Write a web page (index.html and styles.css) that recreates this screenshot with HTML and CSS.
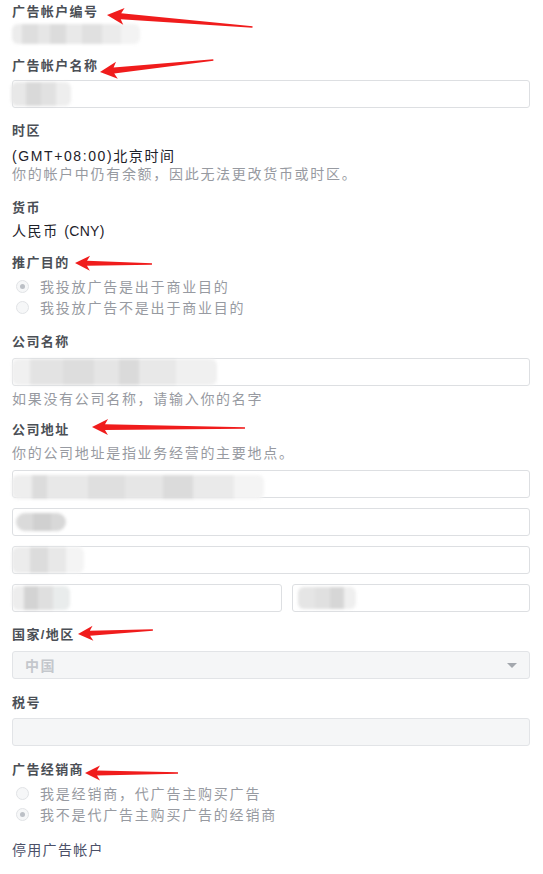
FILE: index.html
```html
<!DOCTYPE html>
<html lang="zh-CN">
<head>
<meta charset="utf-8">
<title>广告帐户设置</title>
<link rel="stylesheet" href="styles.css">
</head>
<body>
<div class="page">
  <div class="label l-first">广告帐户编号</div>
  <div class="blob-row"><span class="blob blob-id"></span></div>

  <div class="label l-name">广告帐户名称</div>
  <div class="input mt4"><span class="blob blob-name"></span></div>

  <div class="label l-tz">时区</div>
  <div class="value mt6">(GMT+08:00)北京时间</div>
  <div class="helper">你的帐户中仍有余额，因此无法更改货币或时区。</div>

  <div class="label l-cur">货币</div>
  <div class="value mt4">人民币 <span class="latin">(CNY)</span></div>

  <div class="label l-purpose">推广目的</div>
  <div class="radios">
    <div class="radio-row"><span class="radio checked"></span><span>我投放广告是出于商业目的</span></div>
    <div class="radio-row"><span class="radio"></span><span>我投放广告不是出于商业目的</span></div>
  </div>

  <div class="label l-company">公司名称</div>
  <div class="input mt6"><span class="blob blob-company"></span></div>
  <div class="helper mt4">如果没有公司名称，请输入你的名字</div>

  <div class="label l-addr">公司地址</div>
  <div class="helper mt4">你的公司地址是指业务经营的主要地点。</div>
  <div class="addr-list">
    <div class="input"><span class="blob blob-a1"></span></div>
    <div class="input"><span class="blob blob-a2"></span></div>
    <div class="input"><span class="blob blob-a3"></span></div>
    <div class="addr-split">
      <div class="input"><span class="blob blob-a4"></span></div>
      <div class="input"><span class="blob blob-a5"></span></div>
    </div>
  </div>

  <div class="label l-country">国家/地区</div>
  <div class="input disabled select mt6"><span class="select-text">中国</span><span class="caret"></span></div>

  <div class="label l-tax">税号</div>
  <div class="input disabled mt5"></div>

  <div class="label l-agency">广告经销商</div>
  <div class="radios">
    <div class="radio-row"><span class="radio"></span><span>我是经销商，代广告主购买广告</span></div>
    <div class="radio-row"><span class="radio checked"></span><span>我不是代广告主购买广告的经销商</span></div>
  </div>

  <div class="deactivate">停用广告帐户</div>

  <svg class="arrows" width="543" height="874" viewBox="0 0 543 874" aria-hidden="true">
    <g fill="#f01c1c">
      <polygon transform="translate(107,15) rotate(4.7)" points="0,0 17,-8.5 14,-3 146,-0.8 146,0.8 14,3 17,8.5"/>
      <polygon transform="translate(100,72) rotate(-6.06)" points="0,0 17,-8.5 14,-3 114,-0.8 114,0.8 14,3 17,8.5"/>
      <polygon transform="translate(75,263) rotate(0.75)" points="0,0 15,-7.5 12,-2.5 77,-0.7 77,0.7 12,2.5 15,7.5"/>
      <polygon transform="translate(92,427) rotate(0.37)" points="0,0 16,-8 13,-2.8 153,-0.8 153,0.8 13,2.8 16,8"/>
      <polygon transform="translate(78,634) rotate(-3.1)" points="0,0 15,-7.5 12,-2.5 75,-0.7 75,0.7 12,2.5 15,7.5"/>
      <polygon transform="translate(85,773) rotate(0)" points="0,0 15,-7.5 12,-2.5 93,-0.7 93,0.7 12,2.5 15,7.5"/>
    </g>
  </svg>
</div>
</body>
</html>
```
FILE: styles.css
```css
* { box-sizing: border-box; }

html, body {
  margin: 0;
  padding: 0;
  background: #ffffff;
}

body {
  font-family: "Liberation Sans", "Noto Sans CJK SC", sans-serif;
  color: #1d2129;
}

.page {
  position: relative;
  width: 543px;
  height: 874px;
  padding: 2px 13px 0 12px;
  overflow: hidden;
}

.label {
  font-size: 13px;
  font-weight: bold;
  letter-spacing: 1.4px;
  line-height: 20px;
  height: 20px;
  color: #4b4f56;
  white-space: nowrap;
}

.l-first { margin-top: 0; }
.l-name { margin-top: 12px; }
.l-tz { margin-top: 13px; }
.l-cur { margin-top: 15px; }
.l-purpose { margin-top: 13px; }
.l-company { margin-top: 14.5px; }
.l-addr { margin-top: 12px; }
.l-country { margin-top: 13px; }
.l-tax { margin-top: 14px; }
.l-agency { margin-top: 14px; }

.mt4 { margin-top: 4px; }
.mt5 { margin-top: 5px; }
.mt6 { margin-top: 6px; }

.value {
  font-size: 14px;
  letter-spacing: 1.6px;
  line-height: 18px;
  color: #1d2129;
  white-space: nowrap;
}

.latin {
  letter-spacing: 0.3px;
}

.helper {
  font-size: 14px;
  letter-spacing: 1.7px;
  line-height: 18px;
  color: #979aa1;
  white-space: nowrap;
}

.blob-row {
  margin-top: 2px;
  height: 20px;
  display: flex;
  align-items: center;
}

.blob {
  display: block;
  filter: blur(1.6px);
  border-radius: 6px;
}

.blob-id {
  width: 128px;
  height: 20px;
  background: linear-gradient(90deg, #ececec 0 8%, #dedede 8% 20%, #e6e6e6 20% 30%, #dcdcdc 30% 42%, #e9e9e9 42% 55%, #e0e0e0 55% 70%, #ebebeb 70% 85%, #f3f3f3 85% 100%);
}

.input {
  height: 28px;
  border: 1px solid #dddfe2;
  border-radius: 3px;
  background: #ffffff;
  display: flex;
  align-items: center;
  overflow: visible;
}

.input.disabled {
  background: #f5f6f7;
  border-color: #e2e4e7;
}

.blob-name {
  width: 60px;
  height: 24px;
  margin-left: -2px;
  background: linear-gradient(90deg, #e8e8e8 0 25%, #d9d9d9 25% 50%, #e1e1e1 50% 75%, #eeeeee 75% 100%);
}

.blob-company {
  width: 205px;
  height: 26px;
  margin-left: -1px;
  background: linear-gradient(90deg, #f0f0f0 0 9%, #e3e3e3 9% 25%, #dddddd 25% 40%, #e5e5e5 40% 52%, #dadada 52% 62%, #e8e8e8 62% 80%, #f0f0f0 80% 100%);
}

.radios {
  margin-top: 2.5px;
}

.radio-row {
  display: flex;
  align-items: center;
  height: 21px;
  font-size: 14px;
  letter-spacing: 1.8px;
  color: #979aa1;
  white-space: nowrap;
}

.radio {
  width: 13px;
  height: 13px;
  margin-left: 4px;
  margin-right: 11px;
  border: 1px solid #e1e3e6;
  border-radius: 50%;
  background: #f6f7f8;
  display: flex;
  align-items: center;
  justify-content: center;
  flex: none;
}

.radio.checked::after {
  content: "";
  width: 5px;
  height: 5px;
  border-radius: 50%;
  background: #bcc0c6;
}

.addr-list {
  margin-top: 8px;
  display: flex;
  flex-direction: column;
  gap: 10px;
}

.addr-split {
  display: grid;
  grid-template-columns: 270px 1fr;
  gap: 10px;
}

.blob-a1 {
  width: 252px;
  height: 24px;
  margin-left: -1px;
  margin-top: 6px;
  background: linear-gradient(90deg, #eeeeee 0 8%, #dcdcdc 8% 14%, #e8e8e8 14% 30%, #dfdfdf 30% 45%, #e6e6e6 45% 60%, #dbdbdb 60% 72%, #eaeaea 72% 88%, #f4f4f4 88% 100%);
}

.blob-a2 {
  width: 50px;
  height: 18px;
  margin-left: 3px;
  border-radius: 9px;
  background: linear-gradient(90deg, #dadada 0 35%, #d0d0d0 35% 70%, #d8d8d8 70% 100%);
}

.blob-a3 {
  width: 72px;
  height: 26px;
  margin-left: -1px;
  background: linear-gradient(90deg, #ececec 0 25%, #dcdcdc 25% 50%, #e8e8e8 50% 75%, #f4f4f4 75% 100%);
}

.blob-a4 {
  width: 58px;
  height: 24px;
  margin-left: -1px;
  background: linear-gradient(90deg, #ededed 0 20%, #d3d3d3 20% 45%, #dfdfdf 45% 70%, #e9ecec 70% 100%);
}

.blob-a5 {
  width: 58px;
  height: 22px;
  margin-left: 5px;
  background: linear-gradient(90deg, #e5e5e5 0 30%, #e0e0e0 30% 55%, #d6d6d6 55% 80%, #efefef 80% 100%);
}

.select {
  justify-content: space-between;
  padding: 0 12px 0 12px;
}

.select-text {
  font-size: 14px;
  font-weight: bold;
  letter-spacing: 1.5px;
  color: #c4c7cc;
}

.caret {
  width: 0;
  height: 0;
  border-left: 5px solid transparent;
  border-right: 5px solid transparent;
  border-top: 5px solid #a4a8ae;
}

.deactivate {
  margin-top: 15.5px;
  font-size: 14px;
  letter-spacing: 1.3px;
  line-height: 20px;
  color: #4b5068;
  white-space: nowrap;
}

.arrows {
  position: absolute;
  left: 0;
  top: 0;
  pointer-events: none;
}
```
